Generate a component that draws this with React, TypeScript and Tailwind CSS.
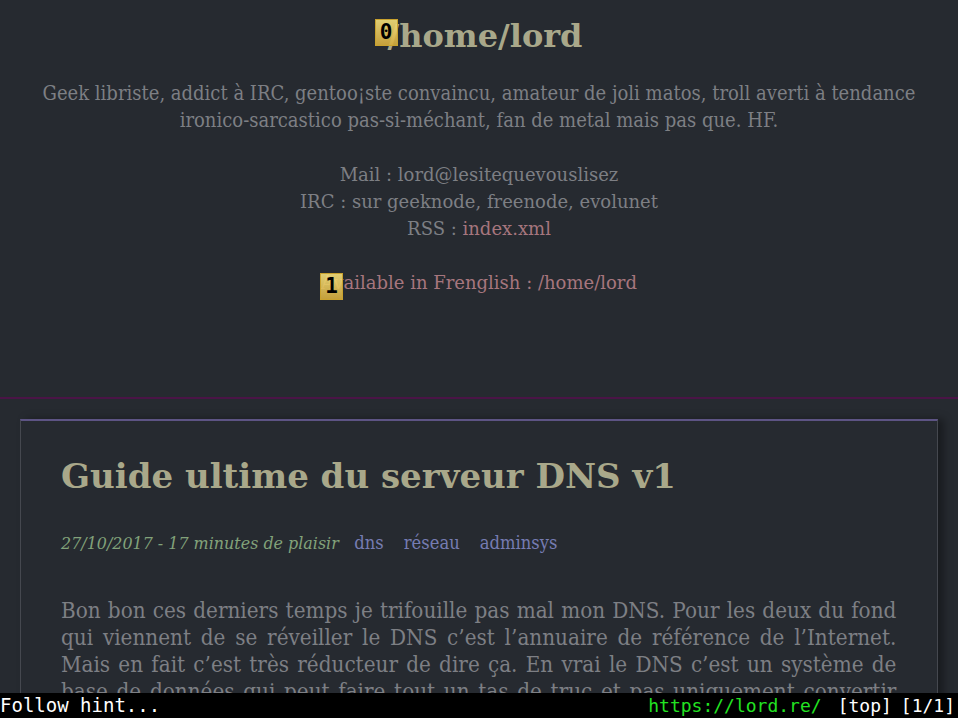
import React from "react";

function Hint({ label }: { label: string }) {
  return (
    <span className="absolute left-0 top-0 z-10 flex h-[27px] w-[23px] items-center justify-center border border-[#c9a22e] bg-gradient-to-b from-[#f5e07a]/90 to-[#d6ad3c]/90 font-['DejaVu_Sans_Mono',monospace] text-[21px] font-bold leading-none text-black">
      {label}
    </span>
  );
}

export default function App() {
  const serif = "font-['DejaVu_Serif',serif]";
  return (
    <div className="relative h-[718px] w-full overflow-hidden bg-[#262a30]">
      <header className="flex h-[397px] flex-col items-center pt-[14px] text-center">
        <h1 className={`${serif} relative pl-[12px] text-[32px] font-bold leading-[44px] text-[#a9a88a]`}>
          <span className="relative">
            <span className="absolute -left-[13px] top-[2px]">
              <Hint label="0" />
            </span>
            /home/lord
          </span>
        </h1>
        <div className="mt-[22px] flex w-full justify-center">
          <p
            className={`${serif} w-[1000px] shrink-0 text-center text-[20px] leading-[27px] text-[#7d7f84] [transform:scaleX(0.9)] [transform-origin:center]`}
          >
            Geek libriste, addict à IRC, gentoo¡ste convaincu, amateur de joli matos, troll averti à tendance
            <br />
            ironico-sarcastico pas-si-méchant, fan de metal mais pas que. HF.
          </p>
        </div>
        <div className={`${serif} mt-[27px] text-[18px] leading-[27px] text-[#7d7f84]`}>
          <div>Mail : lord@lesitequevouslisez</div>
          <div>IRC : sur geeknode, freenode, evolunet</div>
          <div>
            RSS : <span className="text-[#a6767e]">index.xml</span>
          </div>
        </div>
        <div className={`${serif} mt-[27px] text-[18px] leading-[27px] text-[#a6767e]`}>
          <span className="relative">
            <span className="absolute -left-[1px] top-[1px]">
              <Hint label="1" />
            </span>
            Available in Frenglish : /home/lord
          </span>
        </div>
      </header>
      <div className="h-[2px] bg-[#4a1446]" />
      <main className="px-[20px] pt-[20px]">
        <article className="border border-t-2 border-[#45484f] border-t-[#5d5484] bg-[#262a30] px-[40px] pt-[31px] shadow-[6px_0_8px_rgba(0,0,0,0.35)]">
          <h2 className={`${serif} text-[34px] font-bold leading-[48px] text-[#a9a88a]`}>
            Guide ultime du serveur DNS v1
          </h2>
          <p
            className={`${serif} mt-[29px] w-[918px] text-[18px] leading-[27px] [transform:scaleX(0.91)] [transform-origin:left]`}
          >
            <span className="text-[17.5px] italic text-[#82a27a]">27/10/2017 - 17 minutes de plaisir</span>
            <span className="ml-[17px] text-[#767cb2]">dns</span>
            <span className="ml-[22px] text-[#767cb2]">réseau</span>
            <span className="ml-[22px] text-[#767cb2]">adminsys</span>
          </p>
          <p
            className={`${serif} mt-[40px] w-[918px] text-justify text-[22px] leading-[27px] text-[#7d7f84] [transform:scaleX(0.91)] [transform-origin:left]`}
          >
            Bon bon ces derniers temps je trifouille pas mal mon DNS. Pour les deux du fond qui viennent de se réveiller le DNS c’est l’annuaire de référence de l’Internet. Mais en fait c’est très réducteur de dire ça. En vrai le DNS c’est un système de base de données qui peut faire tout un tas de truc et pas uniquement convertir des noms de domaines en adresses IP.
          </p>
        </article>
      </main>
      <div className="fixed bottom-0 left-0 right-0 flex h-[25px] items-center justify-between bg-black font-['DejaVu_Sans_Mono',monospace] leading-[25px] text-white">
        <span className="text-[19px]">Follow hint...</span>
        <span className="flex pr-[3px] text-[18px]">
          <span className="text-[#22e322]">https://lord.re/</span>
          <span className="ml-[16px]">[top]</span>
          <span className="ml-[9px]">[1/1]</span>
        </span>
      </div>
    </div>
  );
}
